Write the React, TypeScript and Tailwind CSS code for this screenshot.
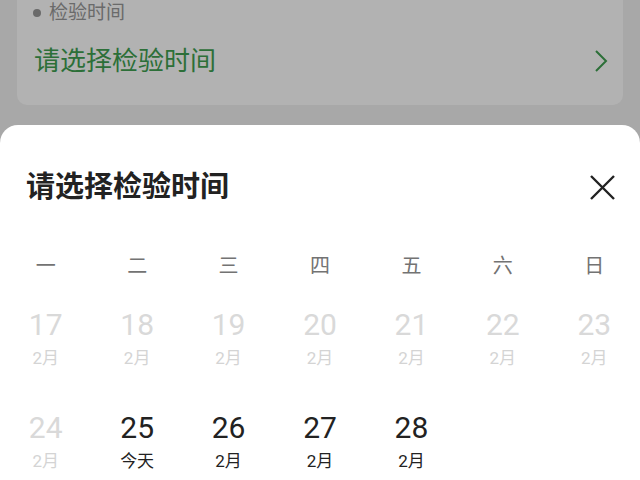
import React from "react";

const font = { fontFamily: '"Roboto", "Noto Sans CJK SC", sans-serif' };

type Day = { d: number; sub: string; active: boolean };

const rows: (Day | null)[][] = [
  [17, 18, 19, 20, 21, 22, 23].map((d) => ({ d, sub: "2月", active: false })),
  [
    { d: 24, sub: "2月", active: false },
    { d: 25, sub: "今天", active: true },
    { d: 26, sub: "2月", active: true },
    { d: 27, sub: "2月", active: true },
    { d: 28, sub: "2月", active: true },
    null,
    null,
  ],
];

const weekdays = ["一", "二", "三", "四", "五", "六", "日"];

export default function App() {
  return (
    <div
      className="w-[640px] h-[480px] bg-[#a8a8a8] overflow-hidden flex flex-col"
      style={font}
    >
      <div className="h-[125px] shrink-0">
        <div className="mx-[17px] h-[105px] bg-[#b2b2b2] rounded-b-[10px] px-[17px]">
          <div className="flex items-center h-[26px]">
            <span className="w-[8px] h-[8px] rounded-full bg-[#6a6a6a] mr-[8px] ml-[-1px]" />
            <span className="text-[19px] leading-[24px] text-[#6a6a6a]">检验时间</span>
          </div>
          <div className="mt-[19px] flex items-center justify-between h-[32px]">
            <span className="text-[26px] leading-[32px] text-[#2c6f38]">请选择检验时间</span>
            <svg width="14" height="24" viewBox="0 0 14 24" className="mr-[-2px]">
              <path d="M2 2 L12 12 L2 22" fill="none" stroke="#2c6f38" strokeWidth="2" />
            </svg>
          </div>
        </div>
      </div>
      <div className="flex-1 bg-white rounded-t-[18px]">
        <div className="flex items-center justify-between pt-[43px] pl-[26px] pr-[23px]">
          <span className="text-[29px] leading-[38px] font-bold text-[#222]">请选择检验时间</span>
          <svg width="29" height="29" viewBox="0 0 29 29">
            <path d="M3 3 L26 26 M26 3 L3 26" stroke="#222" strokeWidth="2.4" fill="none" />
          </svg>
        </div>
        <div className="grid grid-cols-7 mt-[46px]">
          {weekdays.map((w) => (
            <div key={w} className="text-center text-[20px] leading-[28px] text-[#737373]">
              {w}
            </div>
          ))}
        </div>
        <div className="mt-[27px] flex flex-col gap-[41px]">
          {rows.map((row, i) => (
            <div key={i} className="grid grid-cols-7">
              {row.map((c, j) =>
                c ? (
                  <div key={j} className="flex flex-col items-center">
                    <span
                      className={
                        "text-[30px] leading-[36px] " +
                        (c.active ? "text-[#222]" : "text-[#d9d9d9]")
                      }
                    >
                      {c.d}
                    </span>
                    <span
                      className={
                        "mt-[4px] text-[17px] leading-[22px] " +
                        (c.active ? "text-[#222]" : "text-[#d4d4d4]")
                      }
                    >
                      {c.sub}
                    </span>
                  </div>
                ) : (
                  <div key={j} />
                )
              )}
            </div>
          ))}
        </div>
      </div>
    </div>
  );
}
